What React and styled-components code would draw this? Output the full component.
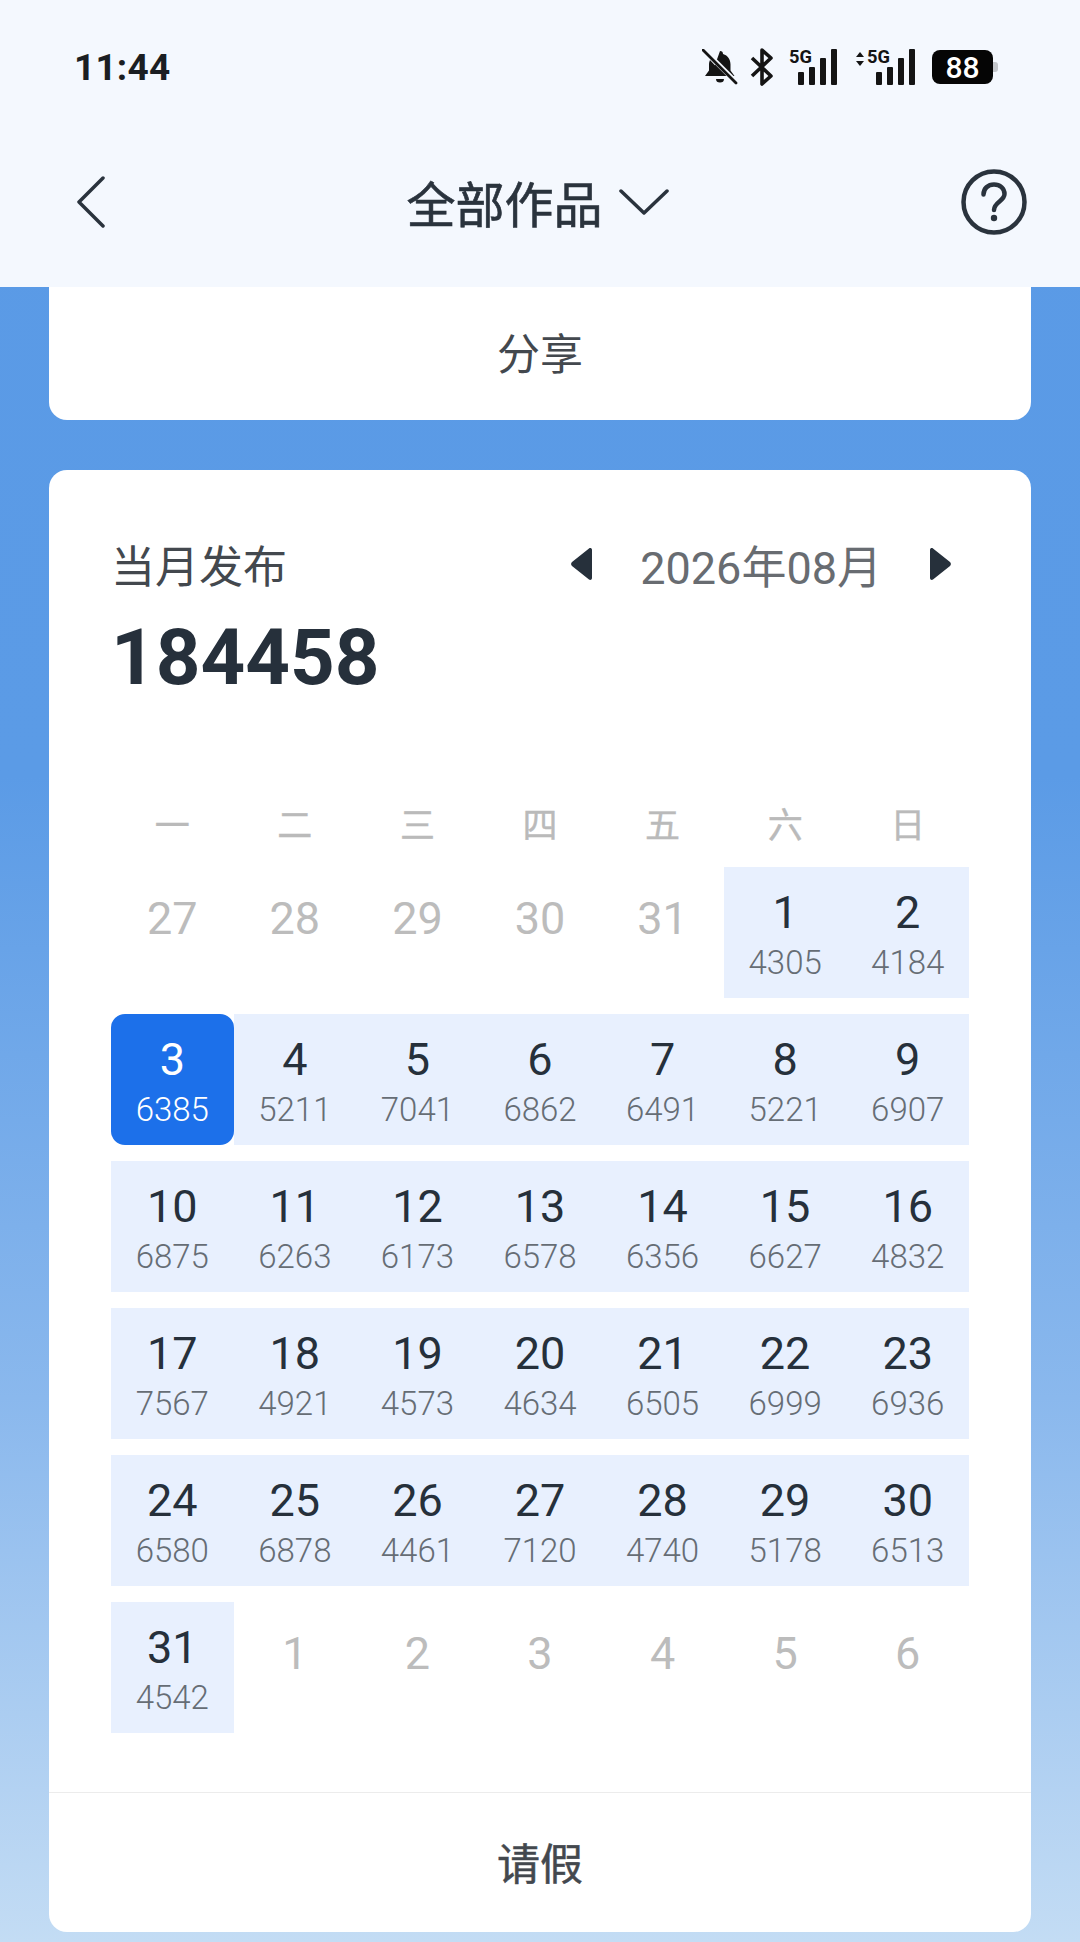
import React from "react";
import styled, { createGlobalStyle } from "styled-components";

const GlobalStyle = createGlobalStyle`
  html, body {
    margin: 0;
    padding: 0;
  }
  body {
    font-family: Roboto, "Noto Sans CJK SC", sans-serif;
  }
`;

const Page = styled.div`
  width: 1080px;
  height: 1942px;
  overflow: hidden;
  display: flex;
  flex-direction: column;
  background: linear-gradient(180deg, #5a9ae6 0%, #5b9be6 40%, #8ab8ed 72%, #c3dcf4 100%);
`;

const Header = styled.header`
  height: 287px;
  flex: none;
  background: #f4f8fe;
  display: flex;
  flex-direction: column;
`;

const StatusBar = styled.div`
  height: 134px;
  padding: 0 87px 0 74px;
  display: flex;
  align-items: center;
  justify-content: space-between;
  box-sizing: border-box;
`;

const Time = styled.span`
  font-size: 37px;
  font-weight: 700;
  color: #1b1e22;
  letter-spacing: 0.2px;
`;

const StatusIcons = styled.div`
  display: flex;
  align-items: center;
`;

const IconSlot = styled.span`
  display: flex;
  margin-left: ${(p) => p.$gap || 0}px;
`;

const Battery = styled.div`
  width: 61px;
  height: 34px;
  margin-left: 15px;
  border-radius: 8px;
  background: #050505;
  color: #fff;
  font-size: 30px;
  font-weight: 500;
  display: flex;
  align-items: center;
  justify-content: center;
  position: relative;
  &:after {
    content: "";
    position: absolute;
    right: -5px;
    top: 12px;
    width: 5px;
    height: 10px;
    border-radius: 0 3px 3px 0;
    background: #c3c6cb;
  }
`;

const NavBar = styled.div`
  flex: 1;
  padding: 0 53px 18px 76px;
  display: flex;
  align-items: center;
  justify-content: space-between;
`;

const Title = styled.div`
  display: flex;
  align-items: center;
  gap: 16px;
  margin-left: 8px;
  font-size: 49px;
  font-weight: 400;
  -webkit-text-stroke: 0.6px #2a333d;
  color: #2a333d;
`;

const Card = styled.section`
  margin: ${(p) => p.$margin};
  background: #fff;
  border-radius: ${(p) => p.$radius};
`;

const Action = styled.div`
  height: ${(p) => p.$height}px;
  padding-bottom: ${(p) => p.$lift || 0}px;
  box-sizing: border-box;
  display: flex;
  align-items: center;
  justify-content: center;
  font-size: 43px;
  font-weight: 400;
  color: #43484e;
  border-top: ${(p) => (p.$divider ? "1px solid #ececec" : "none")};
  -webkit-text-stroke: ${(p) => (p.$divider ? "0.5px #43484e" : "0")};
`;

const CalendarBody = styled.div`
  height: 1322px;
  padding: 66px 62px 0;
  box-sizing: border-box;
`;

const SummaryRow = styled.div`
  display: flex;
  align-items: center;
  justify-content: space-between;
  height: 56px;
  padding-right: 17px;
`;

const SummaryLabel = styled.span`
  font-size: 44px;
  color: #43484e;
`;

const MonthPicker = styled.div`
  display: flex;
  align-items: center;
  gap: 46px;
`;

const MonthLabel = styled.span`
  font-size: 45px;
  font-weight: 400;
  color: #686c71;
`;

const Total = styled.div`
  margin-top: 22px;
  height: 88px;
  line-height: 88px;
  font-size: 78px;
  font-weight: 700;
  color: #26303b;
`;

const WeekRow = styled.div`
  display: grid;
  grid-template-columns: repeat(7, 1fr);
  margin-top: 95px;
  height: 50px;
  align-items: center;
`;

const WeekDay = styled.span`
  text-align: center;
  font-size: 35px;
  color: #bababa;
  -webkit-text-stroke: 0.4px #bababa;
`;

const MonthGrid = styled.div`
  display: grid;
  grid-template-columns: repeat(7, 1fr);
  grid-auto-rows: 131px;
  row-gap: 16px;
  margin-top: 20px;
`;

const DayCell = styled.div`
  display: flex;
  flex-direction: column;
  align-items: center;
  justify-content: flex-start;
  padding-top: ${(p) => (p.$muted ? 25 : 19)}px;
  box-sizing: border-box;
  background: ${(p) => (p.$muted ? "transparent" : p.$selected ? "#1c70ea" : "#e8f0fe")};
  border-radius: ${(p) => (p.$selected ? "14px" : "0")};
`;

const DayNumber = styled.span`
  font-size: 45px;
  line-height: 54px;
  color: ${(p) => (p.$muted ? "#bcbcbc" : p.$selected ? "#fff" : "#26303b")};
`;

const DayCount = styled.span`
  margin-top: 5px;
  font-size: 33px;
  line-height: 36px;
  font-weight: 300;
  color: ${(p) => (p.$selected ? "#fff" : "#666d75")};
`;

const WEEK = ["一", "二", "三", "四", "五", "六", "日"];

const DAYS = [
  ["27"], ["28"], ["29"], ["30"], ["31"], ["1", "4305"], ["2", "4184"],
  ["3", "6385"], ["4", "5211"], ["5", "7041"], ["6", "6862"], ["7", "6491"], ["8", "5221"], ["9", "6907"],
  ["10", "6875"], ["11", "6263"], ["12", "6173"], ["13", "6578"], ["14", "6356"], ["15", "6627"], ["16", "4832"],
  ["17", "7567"], ["18", "4921"], ["19", "4573"], ["20", "4634"], ["21", "6505"], ["22", "6999"], ["23", "6936"],
  ["24", "6580"], ["25", "6878"], ["26", "4461"], ["27", "7120"], ["28", "4740"], ["29", "5178"], ["30", "6513"],
  ["31", "4542"], ["1"], ["2"], ["3"], ["4"], ["5"], ["6"],
];

const BellOff = () => (
  <svg width="36" height="36" viewBox="0 0 36 36">
    <path d="M18 2a3 3 0 0 1 3 3c5 1.500 7.500 5.500 7.500 10.500v6l4 5.500H9L18 2z" fill="#141414" />
    <path d="M8 11c-.7 1.500-1 3-1 5v5.500l-4 5.500h20z" fill="#141414" />
    <path d="M14 30h8a4 3.500 0 0 1-8 0z" fill="#141414" />
    <path d="M1 0l34 34" stroke="#f4f8fe" strokeWidth="5" />
    <path d="M1 1l33 33" stroke="#141414" strokeWidth="2.800" strokeLinecap="round" />
  </svg>
);

const Bluetooth = () => (
  <svg width="24" height="38" viewBox="0 0 24 38" fill="none" stroke="#141414" strokeWidth="3.600">
    <path d="M2 10l19 18-9 8V2l9 8L2 28" strokeLinejoin="round" />
  </svg>
);

const Signal = ({ arrows }) => (
  <svg width={arrows ? 62 : 50} height="46" viewBox={`${arrows ? -12 : 0} -4 ${arrows ? 62 : 50} 46`}>
    {arrows && (
      <g fill="#141414">
        <path d="M-7 4l4 5h-8z" />
        <path d="M-7 18l4-5h-8z" />
      </g>
    )}
    <text x="0" y="15" fontSize="19" fontWeight="700" fill="#141414" fontFamily="Roboto, sans-serif" textLength="23" lengthAdjust="spacingAndGlyphs">
      5G
    </text>
    <rect x="9" y="24" width="6" height="13" rx="1" fill="#141414" />
    <rect x="20" y="19" width="6" height="18" rx="1" fill="#141414" />
    <rect x="31" y="10" width="6" height="27" rx="1" fill="#141414" />
    <rect x="42" y="1" width="6" height="36" rx="1" fill="#141414" />
  </svg>
);

const BackIcon = () => (
  <svg width="30" height="52" viewBox="0 0 30 52" fill="none" stroke="#2a333d" strokeWidth="3.500" strokeLinecap="round" strokeLinejoin="round">
    <path d="M27 2L3 26l24 24" />
  </svg>
);

const ChevronDown = () => (
  <svg width="50" height="28" viewBox="0 0 50 28" fill="none" stroke="#2a333d" strokeWidth="3.500" strokeLinecap="round" strokeLinejoin="round">
    <path d="M2 3l23 22L48 3" />
  </svg>
);

const HelpIcon = () => (
  <svg width="66" height="66" viewBox="0 0 66 66" fill="none" stroke="#2a333d" strokeWidth="4.500" strokeLinecap="round">
    <circle cx="33" cy="33" r="30.500" />
    <path d="M22.500 25.500c0-6 4.500-10 10.500-10s10.500 4 10.500 9.500c0 7-10.500 8-10.500 16" />
    <circle cx="33" cy="49" r="3.200" fill="#2a333d" stroke="none" />
  </svg>
);

const Triangle = ({ right }) => (
  <svg width="24" height="34" viewBox="0 0 24 34">
    <path d={right ? "M2 3c0-2 2-2.500 3-1.500L22 15c1.200 1 1.200 3 0 4L5 32.500c-1 1-3 .5-3-1.500z" : "M22 3c0-2-2-2.500-3-1.500L2 15c-1.200 1-1.200 3 0 4l17 13.500c1 1 3 .5 3-1.500z"} fill="#26303b" />
  </svg>
);

const App = () => (
  <Page>
    <GlobalStyle />
    <Header>
      <StatusBar>
        <Time>11:44</Time>
        <StatusIcons>
          <IconSlot><BellOff /></IconSlot>
          <IconSlot $gap={12}><Bluetooth /></IconSlot>
          <IconSlot $gap={15}><Signal /></IconSlot>
          <IconSlot $gap={16}><Signal arrows /></IconSlot>
          <Battery>88</Battery>
        </StatusIcons>
      </StatusBar>
      <NavBar>
        <BackIcon />
        <Title>
          全部作品
          <ChevronDown />
        </Title>
        <HelpIcon />
      </NavBar>
    </Header>
    <Card $margin="0 49px" $radius="0 0 18px 18px">
      <Action $height={133} $lift={6}>分享</Action>
    </Card>
    <Card $margin="50px 49px 0" $radius="18px">
      <CalendarBody>
        <SummaryRow>
          <SummaryLabel>当月发布</SummaryLabel>
          <MonthPicker>
            <Triangle />
            <MonthLabel>2026年08月</MonthLabel>
            <Triangle right />
          </MonthPicker>
        </SummaryRow>
        <Total>184458</Total>
        <WeekRow>
          {WEEK.map((w) => (
            <WeekDay key={w}>{w}</WeekDay>
          ))}
        </WeekRow>
        <MonthGrid>
          {DAYS.map(([day, count], i) => (
            <DayCell key={i} $muted={!count} $selected={day === "3" && !!count}>
              <DayNumber $muted={!count} $selected={day === "3" && !!count}>{day}</DayNumber>
              {count && <DayCount $selected={day === "3"}>{count}</DayCount>}
            </DayCell>
          ))}
        </MonthGrid>
      </CalendarBody>
      <Action $height={140} $lift={3} $divider>请假</Action>
    </Card>
  </Page>
);

export default App;
